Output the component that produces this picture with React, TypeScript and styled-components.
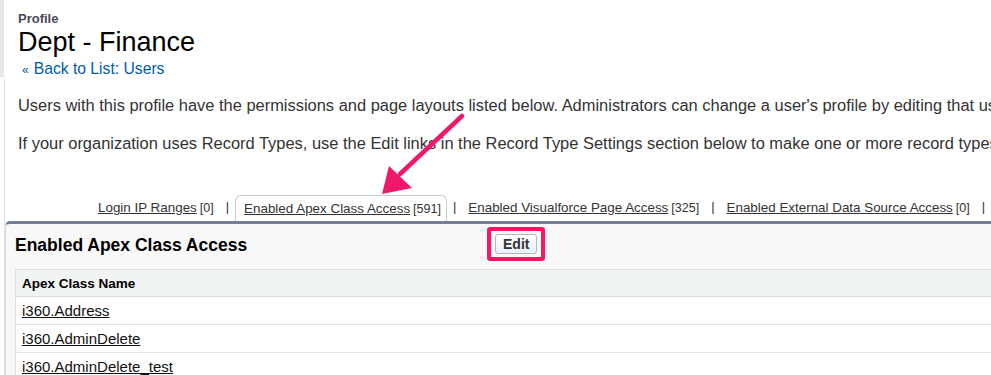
import React from "react";
import styled, { createGlobalStyle } from "styled-components";

const GlobalStyle = createGlobalStyle`
  html, body {
    margin: 0;
    padding: 0;
    background: #ffffff;
    overflow: hidden;
  }
  body {
    font-family: "Liberation Sans", Arial, sans-serif;
    color: #222;
  }
`;

const Page = styled.div`
  position: relative;
  width: 991px;
  height: 375px;
  overflow: hidden;
`;

const Header = styled.header`
  border-left: 4px solid #e6e6e6;
  padding: 11px 0 0 14px;
  height: 66px;
`;

const Kicker = styled.div`
  font-size: 13px;
  font-weight: bold;
  color: #4a4a56;
  line-height: 15px;
`;

const Title = styled.h1`
  margin: 0;
  font-size: 27px;
  font-weight: normal;
  color: #000;
  line-height: 32px;
`;

const BackLink = styled.a`
  display: block;
  margin: 2px 0 0 4px;
  font-size: 15.7px;
  color: #015ba7;
  text-decoration: none;
  line-height: 17px;
`;

const Chevron = styled.span`
  font-size: 12px;
  margin-right: 5px;
`;

const Body = styled.main`
  margin-left: 4px;
  border-left: 1px solid #e2e2e2;
  padding-top: 19px;
`;

const Intro = styled.p`
  margin: 0 0 20px 13px;
  font-size: 16.45px;
  line-height: 18px;
  color: #333;
  white-space: nowrap;
`;

const TabBar = styled.nav`
  display: flex;
  align-items: flex-end;
  padding-left: 87px;
  margin-top: 40px;
  height: 29px;
  white-space: nowrap;
`;

const Tab = styled.div<{ $active?: boolean }>`
  display: flex;
  align-items: baseline;
  padding: 5px 6px 6px;
  height: 26px;
  box-sizing: border-box;
  font-size: 13.4px;
  ${({ $active }) =>
    $active &&
    `
    border: 1px solid #c9c9c9;
    border-bottom: none;
    border-radius: 6px 6px 0 0;
    background: #fff;
    padding-left: 8px;
    padding-right: 5px;
  `}
`;

const TabLink = styled.a`
  color: #333;
  text-decoration: underline;
`;

const Count = styled.span`
  font-size: 12.5px;
  color: #333;
  margin-left: 3px;
`;

const Separator = styled.span`
  font-size: 13px;
  color: #333;
  padding: 0 6px 7px;
`;

const Panel = styled.section`
  border-top: 3px solid #747e96;
  border-left: 1px solid #d8d8d8;
  border-radius: 5px 0 0 0;
  background: #f8f8f8;
  padding: 0 0 0 9px;
  width: 1100px;
`;

const PanelHead = styled.div`
  display: flex;
  align-items: flex-start;
  height: 45px;
  padding-top: 3px;
  box-sizing: border-box;
`;

const PanelTitle = styled.h2`
  margin: 8px 0 0;
  width: 472px;
  font-size: 17.5px;
  line-height: 20px;
  font-weight: bold;
  color: #000;
`;

const Highlight = styled.div`
  border: 4px solid #ff1464;
  border-radius: 3px;
  padding: 3px 4px;
`;

const EditButton = styled.button`
  display: block;
  font-family: "Liberation Sans", Arial, sans-serif;
  font-size: 14px;
  font-weight: bold;
  color: #333;
  padding: 1px 7px;
  height: 20px;
  line-height: 16px;
  border: 1px solid #b5b5b5;
  border-radius: 3px;
  background: linear-gradient(#ffffff, #e7f1fb);
`;

const Table = styled.table`
  border-collapse: collapse;
  width: 100%;
  background: #fff;
  border-left: 1px solid #e0e0e0;
`;

const HeadCell = styled.th`
  text-align: left;
  font-size: 13.5px;
  font-weight: bold;
  color: #000;
  background: #f2f3f3;
  height: 26px;
  padding: 0 6px;
  border-top: 1px solid #e0e0e0;
  border-bottom: 1px solid #dcdcdc;
`;

const Cell = styled.td`
  height: 27px;
  padding: 0 6px;
  font-size: 15px;
  border-bottom: 1px solid #e4e4e4;
`;

const ClassLink = styled.a`
  color: #111;
  text-decoration: underline;
`;

const Arrow = styled.svg`
  position: absolute;
  left: 370px;
  top: 108px;
  pointer-events: none;
`;

const tabs = [
  { label: "Login IP Ranges", count: 0 },
  { label: "Enabled Apex Class Access", count: 591, active: true },
  { label: "Enabled Visualforce Page Access", count: 325 },
  { label: "Enabled External Data Source Access", count: 0 },
];

const classes = ["i360.Address", "i360.AdminDelete", "i360.AdminDelete_test"];

export default function App() {
  return (
    <Page>
      <GlobalStyle />
      <Header>
        <Kicker>Profile</Kicker>
        <Title>Dept - Finance</Title>
        <BackLink href="#">
          <Chevron>«</Chevron>Back to List: Users
        </BackLink>
      </Header>
      <Body>
        <Intro>
          Users with this profile have the permissions and page layouts listed below. Administrators can
          change a user's profile by editing that user's personal information.
        </Intro>
        <Intro>
          If your organization uses Record Types, use the Edit links in the Record Type Settings section
          below to make one or more record types available to users with this profile.
        </Intro>
        <TabBar>
          {tabs.map((t) => (
            <React.Fragment key={t.label}>
              <Tab $active={t.active}>
                <TabLink href="#">{t.label}</TabLink>
                <Count>[{t.count}]</Count>
              </Tab>
              <Separator>|</Separator>
            </React.Fragment>
          ))}
        </TabBar>
        <Panel>
          <PanelHead>
            <PanelTitle>Enabled Apex Class Access</PanelTitle>
            <Highlight>
              <EditButton>Edit</EditButton>
            </Highlight>
          </PanelHead>
          <Table>
            <thead>
              <tr>
                <HeadCell>Apex Class Name</HeadCell>
              </tr>
            </thead>
            <tbody>
              {classes.map((c) => (
                <tr key={c}>
                  <Cell>
                    <ClassLink href="#">{c}</ClassLink>
                  </Cell>
                </tr>
              ))}
            </tbody>
          </Table>
        </Panel>
      </Body>
      <Arrow width="100" height="92" viewBox="0 0 100 92">
        <path d="M92 8 L30 66" stroke="#f0186a" strokeWidth="4.5" strokeLinecap="round" />
        <polygon points="12,86 19,58 42,80" fill="#f0186a" />
      </Arrow>
    </Page>
  );
}
